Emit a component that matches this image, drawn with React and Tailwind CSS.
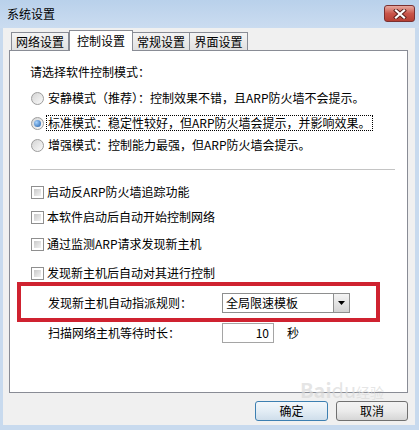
const RADIOS = [
  { text: '安静模式（推荐）：控制效果不错，且ARP防火墙不会提示。', mt: 'mt-[10px]' },
  { text: '标准模式：稳定性较好，但ARP防火墙会提示，并影响效果。', mt: 'mt-[9px]', checked: true },
  { text: '增强模式：控制能力最强，但ARP防火墙会提示。', mt: 'mt-[6px]' },
];

const CHECKS = [
  { text: '启动反ARP防火墙追踪功能', mt: 'mt-[14px]' },
  { text: '本软件启动后自动开始控制网络', mt: 'mt-[9px]' },
  { text: '通过监测ARP请求发现新主机', mt: 'mt-[11px]' },
  { text: '发现新主机后自动对其进行控制', mt: 'mt-[13px]' },
];

const TABS = [
  { label: '网络设置', w: 'w-[58px]' },
  { label: '控制设置', w: 'w-[64px]', active: true },
  { label: '常规设置', w: 'w-[58px]' },
  { label: '界面设置', w: 'w-[59px]' },
];

function Radio({ checked }) {
  return (
    <span className="w-[13px] h-[13px] rounded-full border border-[#9c9c9c] bg-gradient-to-br from-[#d4d4d4] to-[#fbfbfb] flex items-center justify-center shrink-0">
      {checked && (
        <span className="w-[7px] h-[7px] rounded-full bg-[radial-gradient(circle_at_35%_35%,#a8d4ff,#1b5aa6)]" />
      )}
    </span>
  );
}

function Checkbox() {
  return (
    <span className="w-[13px] h-[13px] border border-[#8f8f8f] bg-white p-[2px] shrink-0 flex">
      <span className="flex-1 bg-gradient-to-br from-[#c9c9c9] to-[#f3f3f3]" />
    </span>
  );
}

export default function App() {
  return (
    <div className="w-[419px] h-[430px] bg-[#c8daee] flex flex-col overflow-hidden text-[12px] leading-[16px] text-black font-['Noto_Sans_CJK_SC',sans-serif]">
      {/* Title bar */}
      <div className="h-[28px] shrink-0 flex items-start justify-between pl-[7px] pr-[4px] bg-gradient-to-b from-[#b9d1eb] to-[#cbdcf0]">
        <span className="mt-[6px]">系统设置</span>
        <div className="mt-[5px] w-[31px] h-[17px] rounded-[3px] border border-[#7a3030] bg-gradient-to-b from-[#e6a9a0] via-[#c9554a] to-[#b53f33] flex items-center justify-center">
          <svg width="14" height="10" viewBox="0 0 14 10">
            <path d="M3 1.5 L11 8.5 M11 1.5 L3 8.5" stroke="#5a1f1a" strokeWidth="4" strokeLinecap="square" />
            <path d="M3 1.5 L11 8.5 M11 1.5 L3 8.5" stroke="#ffffff" strokeWidth="2.2" strokeLinecap="square" />
          </svg>
        </div>
      </div>

      {/* Client area */}
      <div className="flex-1 ml-[3px] mr-[4px] mb-[5px] bg-[#f0f0f0] flex flex-col pl-[6px] pr-[7px] relative">
        {/* Tabs */}
        <div className="h-[22px] flex items-end pl-[2px]">
          {TABS.map((t) =>
            t.active ? (
              <div
                key={t.label}
                className={`${t.w} h-[21px] -mb-px relative z-10 border border-b-0 border-[#898c95] bg-white flex justify-center pt-[2px]`}
              >
                {t.label}
              </div>
            ) : (
              <div
                key={t.label}
                className={`${t.w} h-[18px] -ml-px first:ml-0 border border-b-0 border-[#898c95] bg-gradient-to-b from-[#f4f4f4] to-[#e1e1e1] flex justify-center pt-[1px]`}
              >
                {t.label}
              </div>
            )
          )}
        </div>

        {/* Panel */}
        <div className="relative h-[343px] border border-[#898c95] bg-white flex flex-col">
          <div className="mt-[13px] pl-[20px] h-[16px]">请选择软件控制模式：</div>

          {RADIOS.map((r) => (
            <div key={r.text} className={`${r.mt} pl-[21px] h-[16px] flex items-center gap-[2px]`}>
              <Radio checked={r.checked} />
              <span className={r.checked ? 'border border-dotted border-black px-px leading-[14px]' : 'pl-[2px]'}>
                {r.text}
              </span>
            </div>
          ))}

          <div className="mt-[16px] ml-[20px] mr-[12px] h-px bg-[#c4c4c4]" />

          {CHECKS.map((c) => (
            <div key={c.text} className={`${c.mt} pl-[21px] h-[16px] flex items-center gap-[3px]`}>
              <Checkbox />
              <span>{c.text}</span>
            </div>
          ))}

          <div className="mt-[12px] pl-[38px] h-[20px] flex items-center">
            <span className="w-[174px]">发现新主机自动指派规则：</span>
            <div className="w-[128px] h-[20px] border border-[#8e8f8f] bg-white flex">
              <span className="flex-1 pl-[3px] leading-[18px]">全局限速模板</span>
              <span className="w-[16px] border-l border-[#8e8f8f] bg-gradient-to-b from-[#f4f4f4] to-[#d4d4d4] flex items-center justify-center">
                <svg width="7" height="4" viewBox="0 0 7 4">
                  <path d="M0 0 H7 L3.5 4 Z" fill="#000" />
                </svg>
              </span>
            </div>
          </div>

          <div className="mt-[10px] pl-[38px] h-[20px] flex items-center">
            <span className="w-[174px]">扫描网络主机等待时长：</span>
            <div className="w-[52px] h-[20px] border border-[#a5a5a5] bg-white text-right pr-[4px] leading-[18px]">10</div>
            <span className="ml-[13px]">秒</span>
          </div>

          {/* annotation box */}
          <div className="absolute left-[7px] top-[231px] w-[363px] h-[40px] border-[4px] border-[#cf2230]" />
        </div>

        {/* Buttons */}
        <div className="mt-[8px] flex justify-end gap-[8px]">
          <button className="w-[73px] h-[20px] rounded-[3px] border border-[#3c7fb1] bg-gradient-to-b from-[#f2f7fb] via-[#e3edf5] to-[#cfdeeb] leading-[18px]">
            确定
          </button>
          <button className="w-[72px] h-[20px] rounded-[3px] border border-[#707070] bg-gradient-to-b from-[#f3f3f3] via-[#ebebeb] to-[#d6d6d6] leading-[18px]">
            取消
          </button>
        </div>

        {/* watermark */}
        <div className="absolute left-[297px] top-[352px] text-[20px] leading-[20px] font-bold text-[#dadada]/70 pointer-events-none">
          Bai<span className="font-normal">du</span>
          <span className="text-[14px] font-normal">经验</span>
        </div>
      </div>
    </div>
  );
}
